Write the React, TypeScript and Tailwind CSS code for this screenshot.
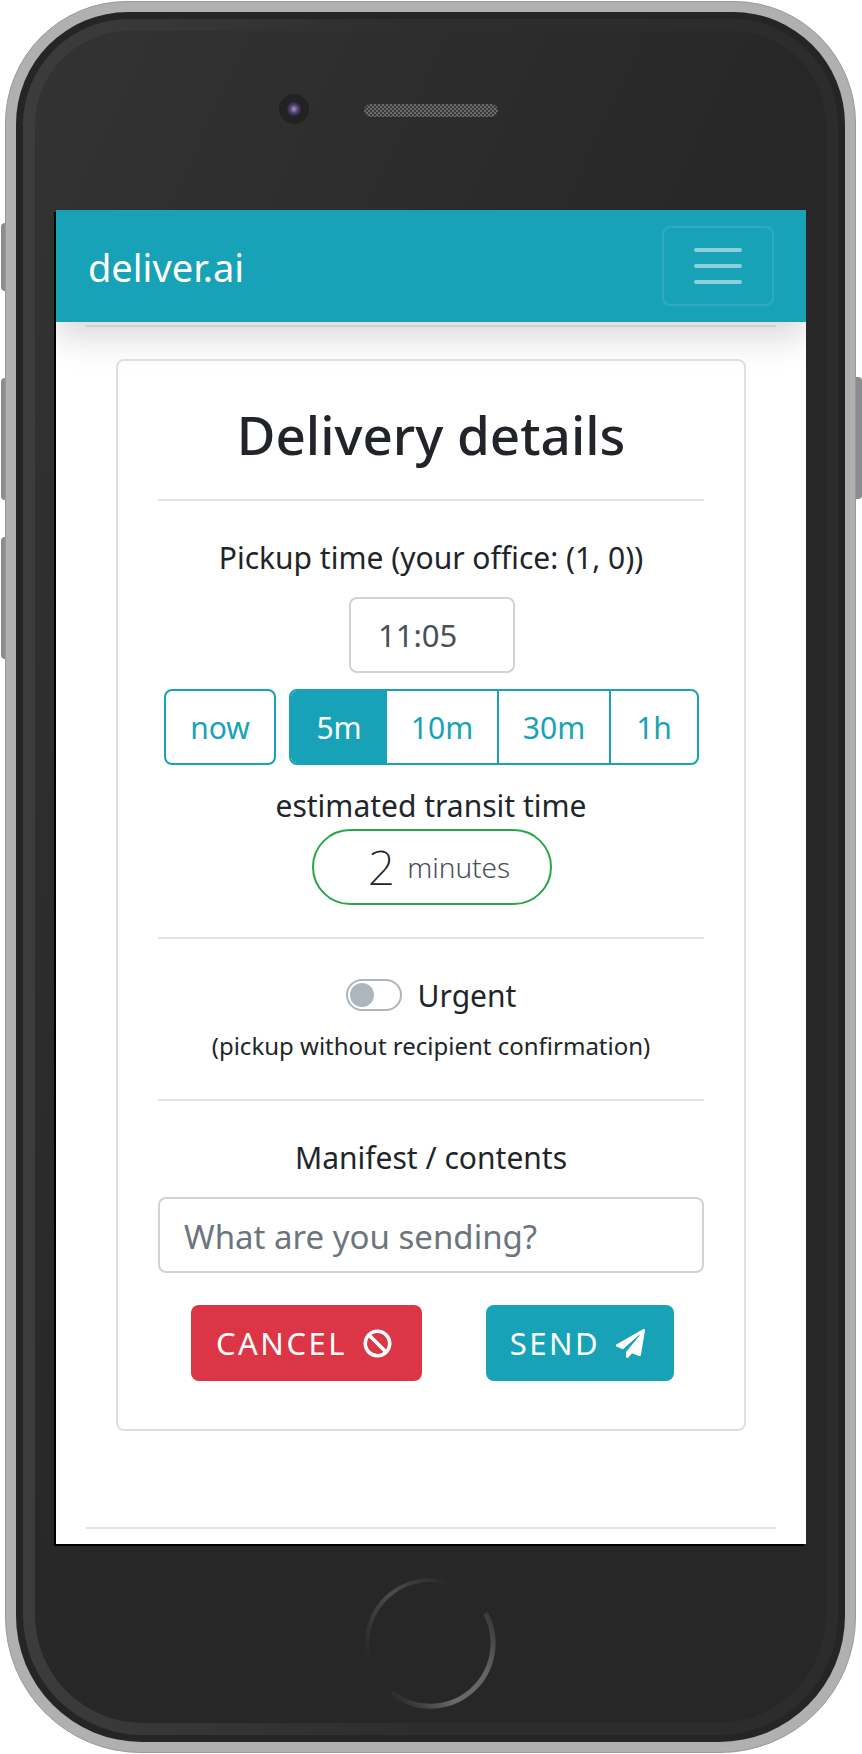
import { FaBan, FaPaperPlane } from "react-icons/fa";

const font = "font-['Noto_Sans',sans-serif]";

function HomeButton() {
  return (
    <svg width="132" height="132" viewBox="0 0 132 132" fill="none">
      <defs>
        <linearGradient id="ringA" gradientUnits="userSpaceOnUse" x1="85" y1="6" x2="5" y2="80">
          <stop offset="0" stopColor="#282828" />
          <stop offset="0.45" stopColor="#4c4c4c" />
          <stop offset="1" stopColor="#282828" />
        </linearGradient>
        <linearGradient id="ringB" gradientUnits="userSpaceOnUse" x1="122" y1="36" x2="27" y2="116">
          <stop offset="0" stopColor="#3c3c3c" />
          <stop offset="0.3" stopColor="#646464" />
          <stop offset="0.65" stopColor="#6a6a6a" />
          <stop offset="1" stopColor="#2c2c2c" />
        </linearGradient>
      </defs>
      <path d="M85 6 A63 63 0 0 0 4.6 80" stroke="url(#ringA)" strokeWidth="4" />
      <path d="M121.6 36.4 A63 63 0 0 1 27.5 116" stroke="url(#ringB)" strokeWidth="5" />
    </svg>
  );
}

export default function App() {
  return (
    <div className={`w-[862px] h-[1754px] bg-white ${font}`}>
      <div className="relative ml-[5px] pt-[1px] w-[851px]">
        {/* side buttons */}
        <div className="absolute left-[-4px] top-[223px] w-[6px] h-[68px] rounded-l bg-[#8b8b90]" />
        <div className="absolute left-[-4px] top-[378px] w-[6px] h-[122px] rounded-l bg-[#8b8b90]" />
        <div className="absolute left-[-4px] top-[537px] w-[6px] h-[122px] rounded-l bg-[#8b8b90]" />
        <div className="absolute right-[-6px] top-[377px] w-[7px] h-[122px] rounded-r bg-[#8b8b90]" />

        <div className="relative h-[1752px] rounded-t-[122px] rounded-b-[136px] border border-[#999999] bg-[#b0b0b0] p-[10px]">
          <div className="h-full rounded-t-[112px] rounded-b-[126px] bg-[#252525] p-[7px]">
            <div className="h-full rounded-t-[106px] rounded-b-[120px] bg-gradient-to-r from-[#3c3c3c] via-[#2d2d2d] to-[#2c2c2c] p-[12px]">
              <div className="h-full flex flex-col rounded-t-[94px] rounded-b-[108px] bg-gradient-to-br from-[#333333] via-[#272727] to-[#272727]">
                <div className="h-[179px] shrink-0 flex items-start pl-[244px] pt-[63px] gap-[55px]">
                  <div className="w-[30px] h-[30px] rounded-full bg-[#222222] flex items-center justify-center">
                    <div className="w-[14px] h-[14px] rounded-full bg-[radial-gradient(circle,#a898b8_0%,#4a3a68_45%,#1a1525_100%)]" />
                  </div>
                  <div className="w-[134px] h-[13px] mt-[10px] rounded-full bg-[repeating-conic-gradient(#6a6a6a_0_25%,#3a3a3a_0_50%)] bg-[length:4px_4px]" />
                </div>

                <div className="ml-[21px] shrink-0 w-[750px] h-[1334px] bg-white flex flex-col overflow-hidden shadow-[-2px_2px_0_#000]">
                  <div className="h-[112px] shrink-0 bg-[#17a2b8] flex items-center justify-between pl-[32px] pr-[32px] shadow-[0_16px_32px_rgba(0,0,0,0.15)]">
                    <span className="text-white text-[38px] leading-none pt-[2px]">deliver.ai</span>
                    <div className="w-[112px] h-[80px] rounded-[8px] border-2 border-white/10 flex flex-col items-center justify-center gap-[12px]">
                      <div className="w-[48px] h-[4px] rounded-full bg-white/50" />
                      <div className="w-[48px] h-[4px] rounded-full bg-white/50" />
                      <div className="w-[48px] h-[4px] rounded-full bg-white/50" />
                    </div>
                  </div>
                  <div className="mx-[30px] mt-[3px] h-[2px] bg-[#cfcfcf]" />

                  <div className="mx-[60px] mt-[32px] h-[1072px] shrink-0 rounded-[8px] border-2 border-[#dfdfdf] px-[40px] pt-[42px] flex flex-col items-center text-[#212529]">
                    <h1 className="text-[53px] leading-[64px] font-medium">Delivery details</h1>
                    <div className="w-full h-[2px] bg-[#e1e2e4] mt-[32px]" />
                    <p className="mt-[35px] text-[30px] leading-[44px]">Pickup time (your office: (1, 0))</p>
                    <div className="mt-[17px] ml-[2px] w-[166px] h-[76px] rounded-[8px] border-2 border-[#ced4da] flex items-center pl-[27px] text-[#495057] text-[31px]">11:05</div>
                    <div className="mt-[16px] w-full flex justify-between text-[30px] text-[#17a2b8]">
                      <div className="w-[112px] h-[76px] ml-[6px] rounded-[8px] border-2 border-[#17a2b8] flex items-center justify-center">now</div>
                      <div className="w-[410px] h-[76px] mr-[5px] rounded-[8px] border-2 border-[#17a2b8] flex overflow-hidden">
                        <div className="w-[96px] bg-[#17a2b8] text-white flex items-center justify-center">5m</div>
                        <div className="w-[112px] border-r-2 border-[#17a2b8] flex items-center justify-center">10m</div>
                        <div className="w-[112px] border-r-2 border-[#17a2b8] flex items-center justify-center">30m</div>
                        <div className="flex-1 flex items-center justify-center">1h</div>
                      </div>
                    </div>
                    <p className="mt-[21px] text-[30px] leading-[40px]">estimated transit time</p>
                    <div className="mt-[3px] ml-[2px] w-[240px] h-[76px] rounded-full border-2 border-[#28a745] flex items-center justify-center gap-[12px] pl-[14px]">
                      <span className="text-[48px] leading-none font-extralight">2</span>
                      <span className="text-[28px] font-light text-[#495057]">minutes</span>
                    </div>
                    <div className="w-full h-[2px] bg-[#e1e2e4] mt-[32px]" />
                    <div className="mt-[34px] flex items-center gap-[16px] h-[44px]">
                      <div className="w-[56px] h-[32px] rounded-full border-2 border-[#adb5bd] flex items-center pl-[2px]">
                        <div className="w-[24px] h-[24px] rounded-full bg-[#adb5bd]" />
                      </div>
                      <span className="text-[30px]">Urgent</span>
                    </div>
                    <p className="mt-[9px] text-[24px] leading-[40px]">(pickup without recipient confirmation)</p>
                    <div className="w-full h-[2px] bg-[#e1e2e4] mt-[33px]" />
                    <p className="mt-[35px] text-[30px] leading-[44px]">Manifest / contents</p>
                    <input
                      placeholder="What are you sending?"
                      className="mt-[17px] w-full h-[76px] shrink-0 rounded-[8px] border-2 border-[#ced4da] px-[24px] pt-[3px] text-[33px] placeholder:text-[#6c757d]"
                    />
                    <div className="mt-[32px] ml-[2px] w-full flex justify-center gap-[64px] text-white text-[31px] tracking-[2.5px]">
                      <div className="w-[231px] h-[76px] rounded-[8px] bg-[#dc3545] flex items-center justify-center gap-[16px] pr-[4px]">
                        CANCEL <FaBan className="text-[29px]" />
                      </div>
                      <div className="w-[188px] h-[76px] rounded-[8px] bg-[#17a2b8] flex items-center justify-center gap-[16px] pr-[4px]">
                        SEND <FaPaperPlane className="text-[29px]" />
                      </div>
                    </div>
                  </div>

                  <div className="mx-[30px] mt-[96px] h-[2px] shrink-0 bg-[#e4e4e4]" />
                </div>

                <div className="mt-[33px] ml-[329px]">
                  <HomeButton />
                </div>
              </div>
            </div>
          </div>
        </div>
      </div>
    </div>
  );
}
